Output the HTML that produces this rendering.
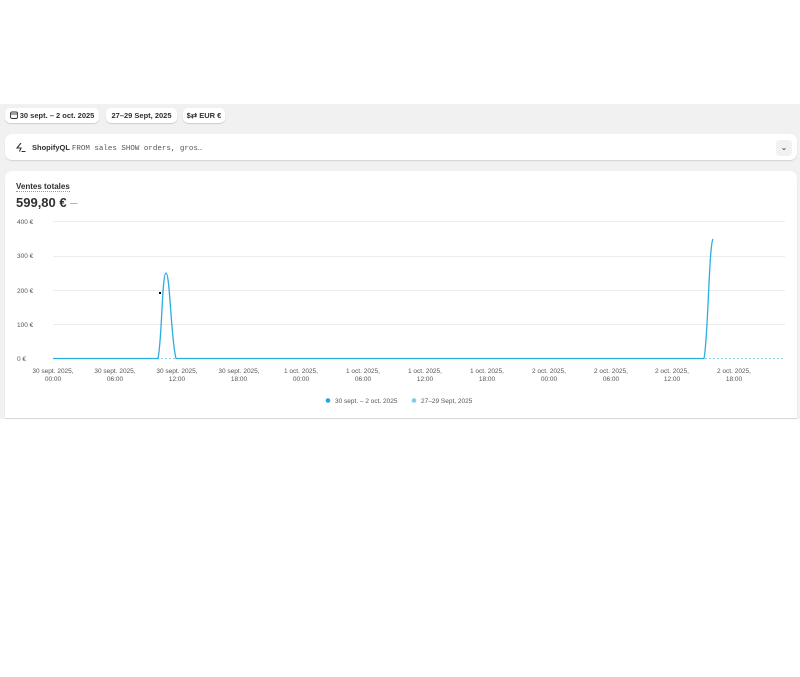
<!DOCTYPE html><html><head><meta charset="utf-8"><style>
body{margin:0;width:800px;height:677px;background:#fff;font-family:"Liberation Sans",sans-serif;position:relative;overflow:hidden}
.bg{position:absolute;left:0;top:104px;width:800px;height:315px;background:#f1f1f1}
.btn{position:absolute;top:108px;height:15px;background:#fff;border-radius:5px;box-shadow:0 1px 1px rgba(0,0,0,.15);font-size:7.5px;color:#303030;line-height:15px;text-align:center;font-weight:bold}
.card{position:absolute;left:5px;width:792px;background:#fff;border-radius:7px;box-shadow:0 1px 1px rgba(0,0,0,.12)}
.mono{font-family:"Liberation Mono",monospace}
</style></head><body>
<div class="bg"></div>
<div class="btn" style="left:5px;width:94px"><svg width="8" height="8" style="vertical-align:-1px" viewBox="0 0 8 8"><rect x="0.5" y="1" width="7" height="6.5" rx="1.5" fill="none" stroke="#333" stroke-width="0.9"/><line x1="0.5" y1="3" x2="7.5" y2="3" stroke="#333" stroke-width="0.9"/></svg> 30 sept. – 2 oct. 2025</div>
<div class="btn" style="left:106px;width:71px">27–29 Sept, 2025</div>
<div class="btn" style="left:183px;width:42px">$⇄ EUR €</div>
<div class="card" style="top:134px;height:26px">
<svg style="position:absolute;left:11px;top:9px" width="10" height="9" viewBox="0 0 10 9"><path d="M5 0 L1 5 H5 L3.5 8.5" fill="none" stroke="#333" stroke-width="1.1"/><line x1="5.5" y1="8.5" x2="9.5" y2="8.5" stroke="#333" stroke-width="1"/></svg>
<div style="position:absolute;left:27px;top:9px;font-size:7.5px;color:#303030;font-weight:bold">ShopifyQL <span class="mono" style="font-weight:normal;color:#555">FROM sales SHOW orders, gros…</span></div>
<div style="position:absolute;left:771px;top:6px;width:16px;height:16px;background:#f1f1f1;border-radius:4px;font-size:8px;text-align:center;line-height:16px;color:#333">⌄</div>
</div>
<div class="card" style="top:171px;height:247px;border-radius:7px 7px 0 0">
<div style="position:absolute;left:11px;top:11px;font-size:8px;color:#303030;border-bottom:1px dotted #999;font-weight:bold">Ventes totales</div>
<div style="position:absolute;left:11px;top:24px;font-size:13px;color:#303030;font-weight:bold">599,80 € <span style="color:#aaa;font-weight:normal">–</span></div>
</div>
<svg style="position:absolute;left:0;top:0" width="800" height="677">
<g stroke="#ececec" stroke-width="1">
<line x1="53" y1="221.5" x2="785" y2="221.5"/><line x1="53" y1="256.5" x2="785" y2="256.5"/><line x1="53" y1="290.5" x2="785" y2="290.5"/><line x1="53" y1="324.5" x2="785" y2="324.5"/></g>
<g font-size="6.5" fill="#555" font-family="Liberation Sans">
<text x="17" y="224">400 €</text><text x="17" y="258">300 €</text><text x="17" y="293">200 €</text><text x="17" y="327">100 €</text><text x="17" y="361">0 €</text>
</g>
<g font-size="6.5" fill="#555" font-family="Liberation Sans" text-anchor="middle">
<text x="53" y="373">30 sept. 2025,</text><text x="53" y="381">00:00</text>
<text x="115" y="373">30 sept. 2025,</text><text x="115" y="381">06:00</text>
<text x="177" y="373">30 sept. 2025,</text><text x="177" y="381">12:00</text>
<text x="239" y="373">30 sept. 2025,</text><text x="239" y="381">18:00</text>
<text x="301" y="373">1 oct. 2025,</text><text x="301" y="381">00:00</text>
<text x="363" y="373">1 oct. 2025,</text><text x="363" y="381">06:00</text>
<text x="425" y="373">1 oct. 2025,</text><text x="425" y="381">12:00</text>
<text x="487" y="373">1 oct. 2025,</text><text x="487" y="381">18:00</text>
<text x="549" y="373">2 oct. 2025,</text><text x="549" y="381">00:00</text>
<text x="611" y="373">2 oct. 2025,</text><text x="611" y="381">06:00</text>
<text x="672" y="373">2 oct. 2025,</text><text x="672" y="381">12:00</text>
<text x="734" y="373">2 oct. 2025,</text><text x="734" y="381">18:00</text>
</g>
<line x1="53" y1="358.5" x2="785" y2="358.5" stroke="#8fd3ef" stroke-width="1" stroke-dasharray="2,2"/>
<path d="M53 358.5 H158 C162 340 162 273 166 273 C170 273 171 340 176 358.5 H704 C708 340 709 245 713 239" fill="none" stroke="#2aaee0" stroke-width="1.3"/>
<rect x="159" y="292" width="2" height="2" fill="#000"/>
<circle cx="328" cy="400.5" r="2.3" fill="#20a8de"/>
<circle cx="414" cy="400.5" r="2.3" fill="#7fcbe9"/>
<g font-size="6.5" fill="#555" font-family="Liberation Sans"><text x="335" y="403">30 sept. – 2 oct. 2025</text><text x="421" y="403">27–29 Sept, 2025</text></g>
</svg>
</body></html>
